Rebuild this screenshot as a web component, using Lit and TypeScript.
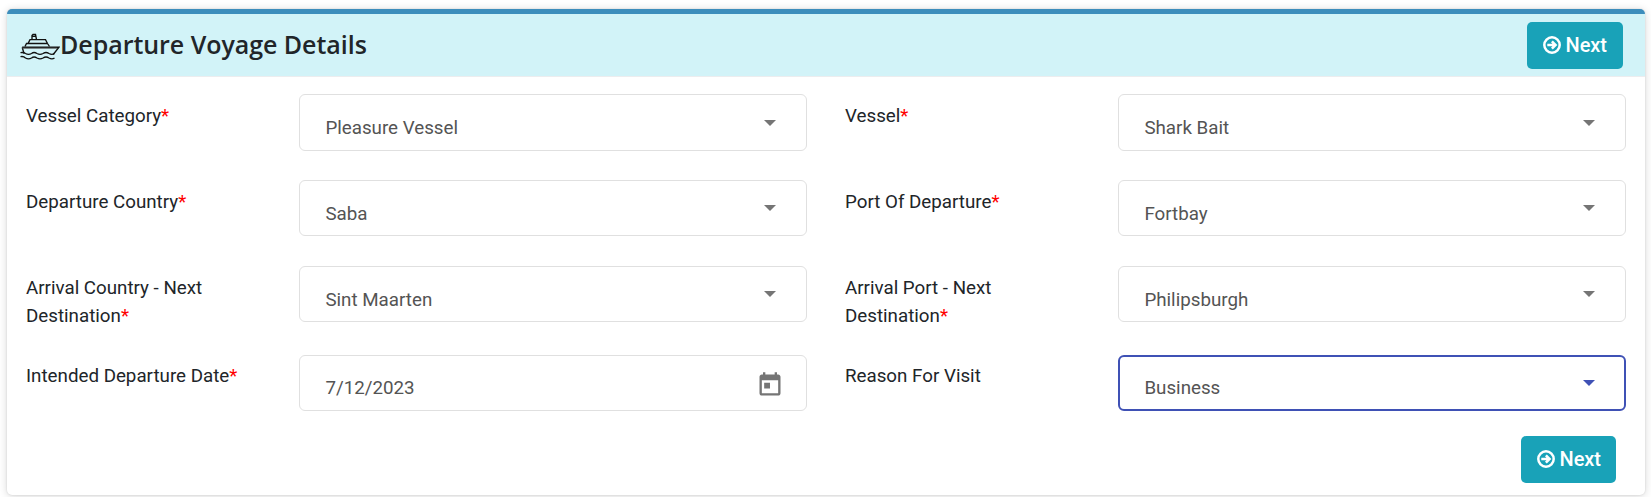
import { LitElement, html, svg, css } from "lit";
import { customElement, property } from "lit/decorators.js";
import { classMap } from "lit/directives/class-map.js";

interface Field {
  label: string;
  value: string;
  required?: boolean;
  date?: boolean;
  focused?: boolean;
  tall?: boolean;
  last?: boolean;
}

const FIELDS: Field[] = [
  { label: "Vessel Category", value: "Pleasure Vessel", required: true, tall: true },
  { label: "Vessel", value: "Shark Bait", required: true, tall: true },
  { label: "Departure Country", value: "Saba", required: true },
  { label: "Port Of Departure", value: "Fortbay", required: true },
  { label: "Arrival Country - Next Destination", value: "Sint Maarten", required: true },
  { label: "Arrival Port - Next Destination", value: "Philipsburgh", required: true },
  { label: "Intended Departure Date", value: "7/12/2023", required: true, date: true, last: true },
  { label: "Reason For Visit", value: "Business", focused: true, last: true },
];

@customElement("next-button")
export class NextButton extends LitElement {
  static styles = css`
    :host { display: block; flex: none; width: 96px; }
    .button {
      display: flex;
      align-items: center;
      box-sizing: border-box;
      width: 100%;
      height: 47px;
      padding: 0 0 1px 15.5px;
      border: 0;
      border-radius: 5px;
      background: #19a2b8;
      color: #fff;
      font: 500 20px/30px Roboto, sans-serif;
      letter-spacing: -0.05px;
      gap: 5px;
    }
    .icon { display: block; width: 18px; height: 18px; flex: none; }
  `;
  render() {
    return html`<button class="button">
      <svg class="icon" viewBox="0 0 18 18" fill="none" stroke="#fff">
        <circle cx="9" cy="9" r="7.7" stroke-width="2.5"></circle>
        <path d="M4.300 9H11M8.900 5.400L12.500 9L8.900 12.600" stroke-width="2.600"></path>
      </svg><span>Next</span>
    </button>`;
  }
}

@customElement("voyage-field")
export class VoyageField extends LitElement {
  @property({ attribute: false }) field!: Field;

  static styles = css`
    :host { display: flex; align-items: flex-start; }
    .label {
      box-sizing: border-box;
      width: 273px;
      padding: 7.5px 50px 0 0;
      font-size: 18.75px;
      line-height: 28px;
      color: #212529;
      flex: none;
    }
    .label.last { padding-top: 6.5px; }
    .star { color: #f00; }
    .control {
      display: flex;
      justify-content: space-between;
      box-sizing: border-box;
      width: 508px;
      height: 56px;
      border: 1px solid #e0e0e0;
      border-radius: 6px;
      padding: 0 25px 0 25.4px;
      color: #545454;
      font-size: 18.75px;
      line-height: 22px;
    }
    .control.tall { height: 57px; }
    .control.focused { border: 2px solid #3f51b5; padding: 0 24px 0 24.4px; }
    .value { padding-top: 22px; }
    .last .value { padding-top: 21px; }
    .focused .value { padding-top: 20px; }
    .arrow { width: 12px; height: 6px; margin: 24px 5px 0 0; fill: #757575; }
    .tall .arrow { margin-top: 25px; }
    .focused .arrow { fill: #3f51b5; margin-top: 23px; }
    .calendar { width: 28px; height: 28px; margin: 14.5px -3px 0 0; fill: #757575; }
  `;
  render() {
    const f = this.field;
    return html`
      <div class=${classMap({ label: true, last: !!f.last })}>${f.label}${f.required ? html`<span class="star">*</span>` : ""}</div>
      <div class=${classMap({ control: true, focused: !!f.focused, tall: !!f.tall, last: !!f.last })}>
        <span class="value">${f.value}</span>
        ${f.date
          ? html`<svg class="calendar" viewBox="0 0 24 24">
              <path d="M19 3h-1V1h-2v2H8V1H6v2H5c-1.110 0-1.990.9-1.990 2L3 19c0 1.100.89 2 2 2h14c1.100 0 2-.9 2-2V5c0-1.100-.9-2-2-2zm0 16H5V8h14v11zM7 10h5v5H7z"></path>
            </svg>`
          : html`<svg class="arrow" viewBox="0 0 12 6"><path d="M0 0H12L6 6Z"></path></svg>`}
      </div>
    `;
  }
}

@customElement("app-root")
export class AppRoot extends LitElement {
  static styles = css`
    :host {
      display: block;
      box-sizing: border-box;
      height: 497px;
      padding: 9px 6px 2px 7px;
      overflow: hidden;
      background: #fff;
      font-family: Roboto, sans-serif;
    }
    .card {
      box-sizing: border-box;
      height: 486px;
      border-top: 5px solid #3c8dbc;
      border-radius: 5px;
      background: #fff;
      box-shadow: 0 0 2px rgba(0, 0, 0, 0.13), 0 1px 8px rgba(0, 0, 0, 0.16);
    }
    .header {
      display: flex;
      align-items: center;
      justify-content: space-between;
      box-sizing: border-box;
      height: 63px;
      padding: 0 22px 0 13px;
      border-bottom: 1px solid #ecedef;
      background: #d2f3f8;
    }
    .heading {
      display: flex;
      align-items: flex-start;
      height: 32px;
      margin: 0;
      font: 600 25px/30px "Open Sans", sans-serif;
      letter-spacing: -0.04px;
      color: #212529;
    }
    .ship { width: 40px; height: 28px; margin-top: 3px; flex: none; }
    .title { white-space: nowrap; }
    .fields {
      display: grid;
      grid-template-columns: 819px 781px;
      grid-template-rows: 86px 86px 89px 56px;
      padding: 17px 0 0 19px;
    }
    .footer { display: flex; justify-content: flex-end; padding: 25px 29px 0 0; }
    .footer next-button { width: 95px; }
  `;

  private ship() {
    return svg`<svg class="ship" viewBox="0 0 40 28" fill="none" stroke="#111" stroke-width="1.350">
      <path d="M12 7.500V3.500L13 2.500H15.500L16.500 7.500M12 4.300H16"></path>
      <path d="M5 14.500L6.500 11.500H8L10 7.600H25.500L27.500 11.500L29.500 14.500M7 11.500H28"></path>
      <path d="M2.200 15.200H39L33.200 22.500M2.200 15.200L4 21.500"></path>
      <path d="M2.500 16.200H37" stroke="#555" stroke-width="1"></path>
      <path d="M.5 20.700Q3.500 20 5.500 21.500Q8.500 23.300 11.500 21.500Q14 19.500 17 21.500Q20 23.300 23 21.500Q26 19.500 29 21.500Q32 23.300 34.500 21.500"></path>
      <path d="M.5 24.700Q3.500 24 5.500 26Q8.500 27.800 11.500 26Q14 24 17 26Q20 27.800 23 26Q26 24 29 26Q32 27.800 34.500 26"></path>
    </svg>`;
  }

  render() {
    return html`<section class="card">
      <header class="header">
        <h3 class="heading">${this.ship()}<span class="title">Departure Voyage Details</span></h3>
        <next-button></next-button>
      </header>
      <div class="fields">
        ${FIELDS.map((f) => html`<voyage-field .field=${f}></voyage-field>`)}
      </div>
      <div class="footer"><next-button></next-button></div>
    </section>`;
  }
}
